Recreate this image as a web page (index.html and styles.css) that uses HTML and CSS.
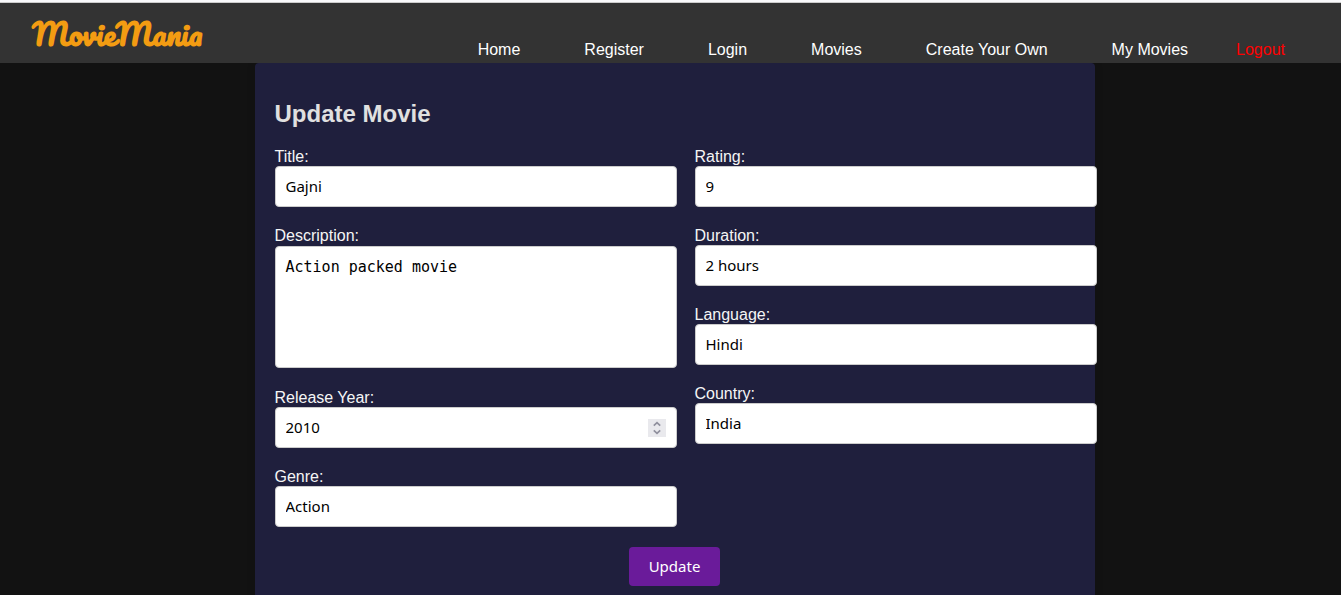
FILE: index.html
```html
<!DOCTYPE html>
<html lang="en">
<head>
<meta charset="utf-8">
<meta name="viewport" content="width=device-width, initial-scale=1">
<title>MovieMania - Update Movie</title>
<link rel="stylesheet" href="styles.css">
</head>
<body>
<header class="navbar">
  <a class="logo" href="#">MovieMania</a>
  <nav class="links">
    <a href="#">Home</a>
    <a href="#">Register</a>
    <a href="#">Login</a>
    <a href="#">Movies</a>
    <a href="#">Create Your Own</a>
    <span class="account"><a href="#">My Movies</a><a class="logout" href="#">Logout</a></span>
  </nav>
</header>
<main class="page">
  <section class="card">
    <h2 class="heading">Update Movie</h2>
    <form>
      <div class="columns">
        <div class="column">
          <div class="field"><label for="title">Title:</label><input class="control" id="title" type="text" value="Gajni"></div>
          <div class="field description"><label for="description">Description:</label><textarea class="control area" id="description">Action packed movie</textarea></div>
          <div class="field"><label for="year">Release Year:</label>
            <div class="number">
              <input class="control" id="year" type="number" value="2010">
              <svg class="spinner" viewBox="0 0 18 18" aria-hidden="true"><path d="M5.8 6.6 9 3.6l3.2 3M5.8 11.4 9 14.4l3.2-3"/></svg>
            </div>
          </div>
          <div class="field"><label for="genre">Genre:</label><input class="control" id="genre" type="text" value="Action"></div>
        </div>
        <div class="column">
          <div class="field"><label for="rating">Rating:</label><input class="control" id="rating" type="text" value="9"></div>
          <div class="field"><label for="duration">Duration:</label><input class="control" id="duration" type="text" value="2 hours"></div>
          <div class="field"><label for="language">Language:</label><input class="control" id="language" type="text" value="Hindi"></div>
          <div class="field"><label for="country">Country:</label><input class="control" id="country" type="text" value="India"></div>
        </div>
      </div>
      <button class="submit" type="submit">Update</button>
    </form>
  </section>
</main>
</body>
</html>
```
FILE: styles.css
```css
html { overflow: hidden; }
body {
  margin: 0;
  border-top: 2px solid #f9f9fb;
  background: #121212;
  color: #f5f5f5;
  font: 16px/18px "Liberation Sans", Arial, sans-serif;
}
.navbar {
  position: relative;
  z-index: 1;
  display: flex;
  justify-content: space-between;
  align-items: flex-end;
  box-sizing: border-box;
  min-height: 61px;
  padding: 0 56px 4px 32px;
  border-top: 1px solid #cccccc;
  background: #333333;
}
.logo {
  padding-bottom: 7px;
  color: #f39c12;
  font: bold 30px/36px Pacifico, cursive;
  text-decoration: none;
}
.links { display: flex; gap: 64px; }
.links a { color: #ffffff; text-decoration: none; }
.account { display: flex; gap: 48px; }
.links .logout { color: #ff0000; }
.page { padding-left: 8px; }
.card {
  box-sizing: border-box;
  max-width: 840px;
  margin: 0 auto;
  padding: 37px 20px 20px;
  border-radius: 4px;
  background: #1f1f3d;
  box-shadow: 0 0 10px rgba(0, 0, 0, 0.1);
}
.heading {
  margin: 0 0 20px;
  color: #e0e0e0;
  font-size: 24px;
  line-height: 28px;
}
.columns {
  display: grid;
  grid-template-columns: 1fr 1fr;
  column-gap: 40px;
}
.field { margin-bottom: 20px; }
.field label { display: block; }
.control {
  display: block;
  box-sizing: content-box;
  width: 100%;
  height: 19px;
  padding: 10px;
  border: 1px solid #cccccc;
  border-radius: 4px;
  background: #ffffff;
  color: #000000;
  font: 15px/19px "Noto Sans", sans-serif;
}
.area {
  height: 100px;
  margin-top: 1px;
  resize: none;
  font: 15px/20px Consolas, "DejaVu Sans Mono", monospace;
}
.description { margin-bottom: 21px; }
.number { position: relative; }
.number .control { appearance: textfield; -moz-appearance: textfield; }
.number .control::-webkit-inner-spin-button { appearance: none; }
.spinner {
  position: absolute;
  top: 12px;
  right: -11px;
  width: 18px;
  height: 18px;
  background: #e9e9ed;
  fill: none;
  stroke: #8f8f9d;
  stroke-width: 1.7;
}
.submit {
  display: block;
  margin: 0 auto;
  padding: 10px 20px;
  border: 0;
  border-radius: 4px;
  background: #6a1b9a;
  color: #ffffff;
  font: 15px/19px "Noto Sans", sans-serif;
}
```
